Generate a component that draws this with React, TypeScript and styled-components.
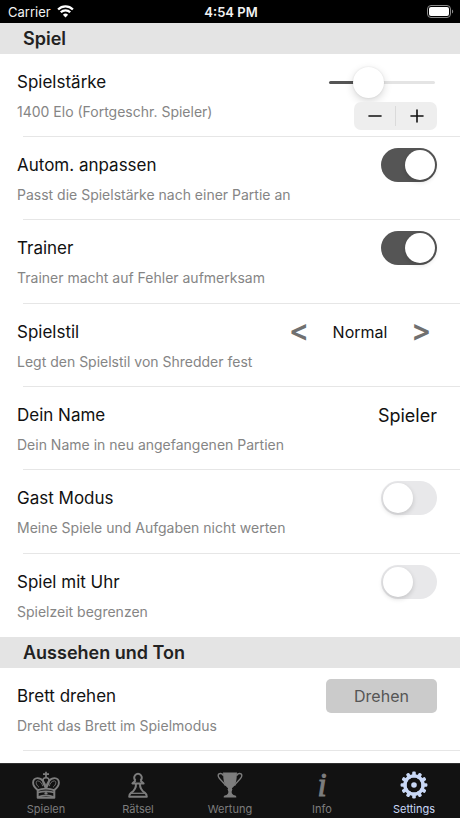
import React, { useState } from "react";
import styled, { createGlobalStyle, css } from "styled-components";

const GlobalStyle = createGlobalStyle`
  *, *::before, *::after { box-sizing: border-box; }
  body {
    margin: 0;
    background: #ffffff;
    font-family: Inter, "Liberation Sans", sans-serif;
    color: #111111;
  }
  button, input { font: inherit; color: inherit; margin: 0; padding: 0; border: 0; background: none; }
  button { cursor: pointer; }
`;

const Screen = styled.div`
  display: flex;
  flex-direction: column;
  height: 100vh;
`;

const StatusBar = styled.header`
  display: grid;
  grid-template-columns: 1fr auto 1fr;
  align-items: center;
  height: 23px;
  padding: 0 6px 0 8px;
  background: #000000;
  color: #f2f2f2;
  font-size: 13px;
  line-height: 16px;
`;

const Carrier = styled.span`
  display: flex;
  align-items: center;
  gap: 6px;
`;

const Clock = styled.time`
  font-weight: 600;
`;

const BatterySlot = styled.span`
  display: flex;
  justify-content: flex-end;
`;

const Content = styled.main`
  flex: 1;
  min-height: 0;
  overflow-y: auto;
  scrollbar-width: none;
`;

const SectionTitle = styled.h2`
  margin: 0;
  padding: 0 23px;
  height: 31px;
  background: #e4e4e4;
  color: #222222;
  font-size: 18px;
  line-height: 32px;
  font-weight: 600;
`;

const Rows = styled.div`
  display: flex;
  flex-direction: column;
`;

const RowBox = styled.div`
  display: flex;
  justify-content: space-between;
  height: 83px;
  padding: 11px 23px 0 17px;
  background: linear-gradient(#e6e6e6, #e6e6e6) 23px 100% / 100% 1px no-repeat;
  &:nth-child(3n) { height: 84px; }
  &:last-child:not(:only-child) { background: none; }
`;

const Labels = styled.div`
  display: flex;
  flex-direction: column;
  gap: 8px;
  padding-top: 5px;
`;

const Label = styled.label`
  font-size: 17px;
  line-height: 24px;
`;

const Hint = styled.span`
  color: #858585;
  font-size: 14px;
  line-height: 20px;
`;

const Control = styled.div`
  display: flex;
  flex-direction: column;
  align-items: flex-end;
`;

const Toggle = styled.input`
  appearance: none;
  display: flex;
  width: 56px;
  height: 34px;
  padding: 2px;
  border-radius: 17px;
  background: #e8e8ea;
  cursor: pointer;
  &::before {
    content: "";
    width: 30px;
    height: 30px;
    border-radius: 50%;
    background: #ffffff;
    box-shadow: 0 2px 5px rgba(0, 0, 0, 0.16);
  }
  &:checked {
    justify-content: flex-end;
    background: #555555;
  }
`;

const Slider = styled.input`
  appearance: none;
  width: 106px;
  height: 34px;
  cursor: pointer;
  &::-webkit-slider-runnable-track {
    height: 3px;
    border-radius: 2px;
    background: linear-gradient(to right, #555555 var(--fill), #e4e4e4 var(--fill));
  }
  &::-webkit-slider-thumb {
    appearance: none;
    width: 31px;
    height: 31px;
    margin-top: -14px;
    border-radius: 50%;
    background: #ffffff;
    box-shadow: 0 3px 8px rgba(0, 0, 0, 0.16), 0 0 2px rgba(0, 0, 0, 0.1);
  }
`;

const Strength = styled.div`
  display: flex;
  flex-direction: column;
  align-items: flex-start;
  gap: 3px;
  width: 108px;
`;

const Stepper = styled.div`
  display: flex;
  align-items: center;
  align-self: flex-end;
  width: 83px;
  height: 28px;
  border-radius: 7px;
  background: #eeeeee;
`;

const StepButton = styled.button`
  flex: 1;
  height: 20px;
  display: grid;
  place-items: center;
  & + & { border-left: 1px solid #dadada; }
`;

const Picker = styled.div`
  display: flex;
  align-items: center;
  height: 34px;
  margin-right: 6px;
  font-size: 16px;
`;

const PickerValue = styled.output`
  width: 102px;
  text-align: center;
`;

const ArrowButton = styled.button`
  width: 20px;
  display: flex;
  justify-content: center;
  color: #707070;
  font-size: 30px;
  line-height: 30px;
  font-weight: 600;
  padding-bottom: 4px;
`;

const NameInput = styled.input`
  width: 140px;
  height: 34px;
  text-align: right;
  font-size: 18px;
  outline: none;
`;

const ActionButton = styled.button`
  width: 111px;
  height: 34px;
  border-radius: 5px;
  background: #cbcbcb;
  color: #555555;
  font-size: 16px;
`;

const TabBar = styled.nav`
  display: flex;
  height: 55px;
  border-top: 1px solid #303030;
  background: #121212;
`;

const Tab = styled.button<{ $active?: boolean }>`
  flex: 1;
  display: flex;
  flex-direction: column;
  align-items: center;
  gap: 2px;
  padding-top: 6px;
  color: #7d7d7d;
  font-size: 11px;
  line-height: 14px;
  ${(p) => p.$active && css`color: #c9d8f6;`}
`;

const TabIcon = styled.span`
  display: grid;
  place-items: center;
  height: 30px;
`;

const InfoGlyph = styled.span`
  font-family: "Liberation Serif", serif;
  font-size: 33px;
  line-height: 30px;
  font-weight: 400;
  font-style: italic;
  -webkit-text-stroke: 1px currentColor;
`;

const WifiIcon = () => (
  <svg width="17" height="13" viewBox="0 0 17 13" fill="none" stroke="#fff" strokeWidth="2.3" aria-hidden="true">
    <path d="M1.1 4.5a10.5 10.5 0 0 1 14.8 0" />
    <path d="M3.8 7.3a6.6 6.6 0 0 1 9.4 0" />
    <path d="M8.5 12.4 5.9 9.7a3.7 3.7 0 0 1 5.2 0z" fill="#fff" stroke="none" />
  </svg>
);

const BatteryIcon = () => (
  <svg width="27" height="13" viewBox="0 0 27 13" role="img" aria-label="Battery">
    <rect x="0.5" y="0.5" width="23" height="12" rx="3.5" fill="none" stroke="#8a8a8a" />
    <rect x="2" y="2" width="20" height="9" rx="2" fill="#fff" />
    <path d="M25 4.5c1.6.6 1.6 3.4 0 4z" fill="#8a8a8a" />
  </svg>
);

const StepIcon = ({ plus }: { plus?: boolean }) => (
  <svg width="14" height="14" viewBox="0 0 14 14" stroke="#111" strokeWidth="1.6" strokeLinecap="round" aria-hidden="true">
    <path d={plus ? "M1 7h12M7 1v12" : "M1 7h12"} />
  </svg>
);

const KingIcon = () => (
  <svg width="28" height="28" viewBox="0 0 28 28" fill="none" stroke="currentColor" strokeLinejoin="round" aria-hidden="true">
    <path d="M14 .8v6M11 3.2h6" strokeWidth="1.7" />
    <path d="M14 17.4c-1.6-3-3.2-5.3-3.2-7.5a3.2 3.2 0 0 1 6.4 0c0 2.2-1.6 4.5-3.2 7.5z" strokeWidth="1.6" />
    <path d="M6 19.2C2.8 16.9 1.1 14.4 1.1 11.8c0-2.7 1.8-4.7 4.3-4.7 4.4 0 8.2 4.3 8.3 10.5-2.8 0-5.2.4-7.7 1.6z" strokeWidth="1.9" />
    <path d="M22 19.2c3.2-2.3 4.9-4.8 4.9-7.4 0-2.7-1.8-4.7-4.3-4.7-4.4 0-8.2 4.3-8.3 10.5 2.8 0 5.2.4 7.7 1.6z" strokeWidth="1.9" />
    <path d="M7 16.3c-1.7-1.4-2.8-3-2.8-4.6 0-1.3.7-1.9 1.7-1.8 2.4.3 4.2 2.4 4.8 5.3M21 16.3c1.7-1.4 2.8-3 2.8-4.6 0-1.3-.7-1.9-1.7-1.8-2.4.3-4.2 2.4-4.8 5.3" strokeWidth="0.8" />
    <path d="M5.7 19v7.7h16.6V19" strokeWidth="2" />
    <path d="M6 21.6c4.8-1.5 11.2-1.5 16 0M6 26c4.8-1.9 11.2-1.9 16 0" strokeWidth="1.6" />
    <path d="m14 20.8 2 1.5-2 1.5-2-1.5z" fill="currentColor" stroke="none" />
  </svg>
);

const PawnIcon = () => (
  <svg width="20" height="26" viewBox="0 0 20 26" fill="none" stroke="currentColor" strokeWidth="2" strokeLinejoin="round" aria-hidden="true">
    <path d="M7.6 8.6a3.8 3.8 0 1 1 4.8 0" />
    <path d="M7.6 8.4 4.4 11.4h11.2l-3.2-3" />
    <path d="M8 11.4c.2 4-1.5 7.4-5 9.4-1.3.8-1.8 2-1.8 4h17.6c0-2-.5-3.2-1.8-4-3.5-2-5.2-5.4-5-9.4" />
    <path d="M3 21.3h14" strokeWidth="1.3" />
  </svg>
);

const TrophyIcon = () => (
  <svg width="26" height="28" viewBox="0 0 26 28" fill="currentColor" aria-hidden="true">
    <path d="M6 1.4h14l-.4 6c-.4 5.2-2.5 8.4-5 10v3c0 2 .9 3.4 3.6 4.2 1 .3 1.1 1 1.1 2H6.7c0-1 .1-1.7 1.1-2 2.7-.8 3.6-2.2 3.6-4.2v-3c-2.5-1.6-4.6-4.8-5-10z" />
    <path d="M6.4 4.8C5.6 2 1.4 1.7 1.2 4.4 1 8 6.4 10.2 8.6 14.8M19.6 4.8c.8-2.8 5-3.1 5.2-.4.2 3.6-5.2 5.8-7.4 10.4" fill="none" stroke="currentColor" strokeWidth="1.4" />
    <circle cx="13" cy="18.4" r="2.3" />
  </svg>
);

const GearIcon = () => (
  <svg width="28" height="28" viewBox="0 0 28 28" aria-hidden="true">
    <g fill="currentColor">
      {Array.from({ length: 12 }, (_, i) => (
        <rect key={i} x="12.2" y="0.6" width="3.6" height="6" rx="1.2" transform={`rotate(${i * 30} 14 14)`} />
      ))}
    </g>
    <circle cx="14" cy="14" r="9.1" fill="none" stroke="currentColor" strokeWidth="3.4" />
    <circle cx="14" cy="14" r="2.8" fill="currentColor" />
  </svg>
);

type RowProps = { id: string; title: string; hint: string; children: React.ReactNode };

const Row = ({ id, title, hint, children }: RowProps) => (
  <RowBox>
    <Labels>
      <Label htmlFor={id}>{title}</Label>
      <Hint id={`${id}-hint`}>{hint}</Hint>
    </Labels>
    <Control>{children}</Control>
  </RowBox>
);

const MIN_ELO = 850;
const MAX_ELO = 2600;
const STYLES = ["Solide", "Normal", "Aggressiv"];

const TABS = [
  { label: "Spielen", icon: <KingIcon /> },
  { label: "Rätsel", icon: <PawnIcon /> },
  { label: "Wertung", icon: <TrophyIcon /> },
  { label: "Info", icon: <InfoGlyph aria-hidden="true">i</InfoGlyph> },
  { label: "Settings", icon: <GearIcon /> },
];

export default function App() {
  const [elo, setElo] = useState(1400);
  const [style, setStyle] = useState(1);
  const [tab, setTab] = useState("Settings");
  const fill = `${((elo - MIN_ELO) / (MAX_ELO - MIN_ELO)) * 100}%`;
  const step = (d: number) => setElo((v) => Math.min(MAX_ELO, Math.max(MIN_ELO, v + d)));
  const cycle = (d: number) => setStyle((v) => (v + d + STYLES.length) % STYLES.length);

  return (
    <Screen>
      <GlobalStyle />
      <StatusBar>
        <Carrier>Carrier <WifiIcon /></Carrier>
        <Clock>4:54 PM</Clock>
        <BatterySlot><BatteryIcon /></BatterySlot>
      </StatusBar>
      <Content>
        <SectionTitle>Spiel</SectionTitle>
        <Rows>
          <Row id="strength" title="Spielstärke" hint={`${elo} Elo (Fortgeschr. Spieler)`}>
            <Strength>
              <Slider
                id="strength"
                type="range"
                min={MIN_ELO}
                max={MAX_ELO}
                step={10}
                value={elo}
                onChange={(e) => setElo(Number(e.target.value))}
                style={{ "--fill": fill } as React.CSSProperties}
              />
              <Stepper>
                <StepButton aria-label="Schwächer" onClick={() => step(-10)}><StepIcon /></StepButton>
                <StepButton aria-label="Stärker" onClick={() => step(10)}><StepIcon plus /></StepButton>
              </Stepper>
            </Strength>
          </Row>
          <Row id="adapt" title="Autom. anpassen" hint="Passt die Spielstärke nach einer Partie an">
            <Toggle id="adapt" type="checkbox" defaultChecked />
          </Row>
          <Row id="trainer" title="Trainer" hint="Trainer macht auf Fehler aufmerksam">
            <Toggle id="trainer" type="checkbox" defaultChecked />
          </Row>
          <Row id="style" title="Spielstil" hint="Legt den Spielstil von Shredder fest">
            <Picker>
              <ArrowButton aria-label="Vorheriger Spielstil" onClick={() => cycle(-1)}>&lt;</ArrowButton>
              <PickerValue id="style">{STYLES[style]}</PickerValue>
              <ArrowButton aria-label="Nächster Spielstil" onClick={() => cycle(1)}>&gt;</ArrowButton>
            </Picker>
          </Row>
          <Row id="name" title="Dein Name" hint="Dein Name in neu angefangenen Partien">
            <NameInput id="name" type="text" defaultValue="Spieler" />
          </Row>
          <Row id="guest" title="Gast Modus" hint="Meine Spiele und Aufgaben nicht werten">
            <Toggle id="guest" type="checkbox" />
          </Row>
          <Row id="clock" title="Spiel mit Uhr" hint="Spielzeit begrenzen">
            <Toggle id="clock" type="checkbox" />
          </Row>
        </Rows>
        <SectionTitle>Aussehen und Ton</SectionTitle>
        <Rows>
          <Row id="flip" title="Brett drehen" hint="Dreht das Brett im Spielmodus">
            <ActionButton id="flip">Drehen</ActionButton>
          </Row>
        </Rows>
      </Content>
      <TabBar>
        {TABS.map(({ label, icon }) => (
          <Tab
            key={label}
            $active={label === tab}
            aria-current={label === tab ? "page" : undefined}
            onClick={() => setTab(label)}
          >
            <TabIcon>{icon}</TabIcon>
            {label}
          </Tab>
        ))}
      </TabBar>
    </Screen>
  );
}
